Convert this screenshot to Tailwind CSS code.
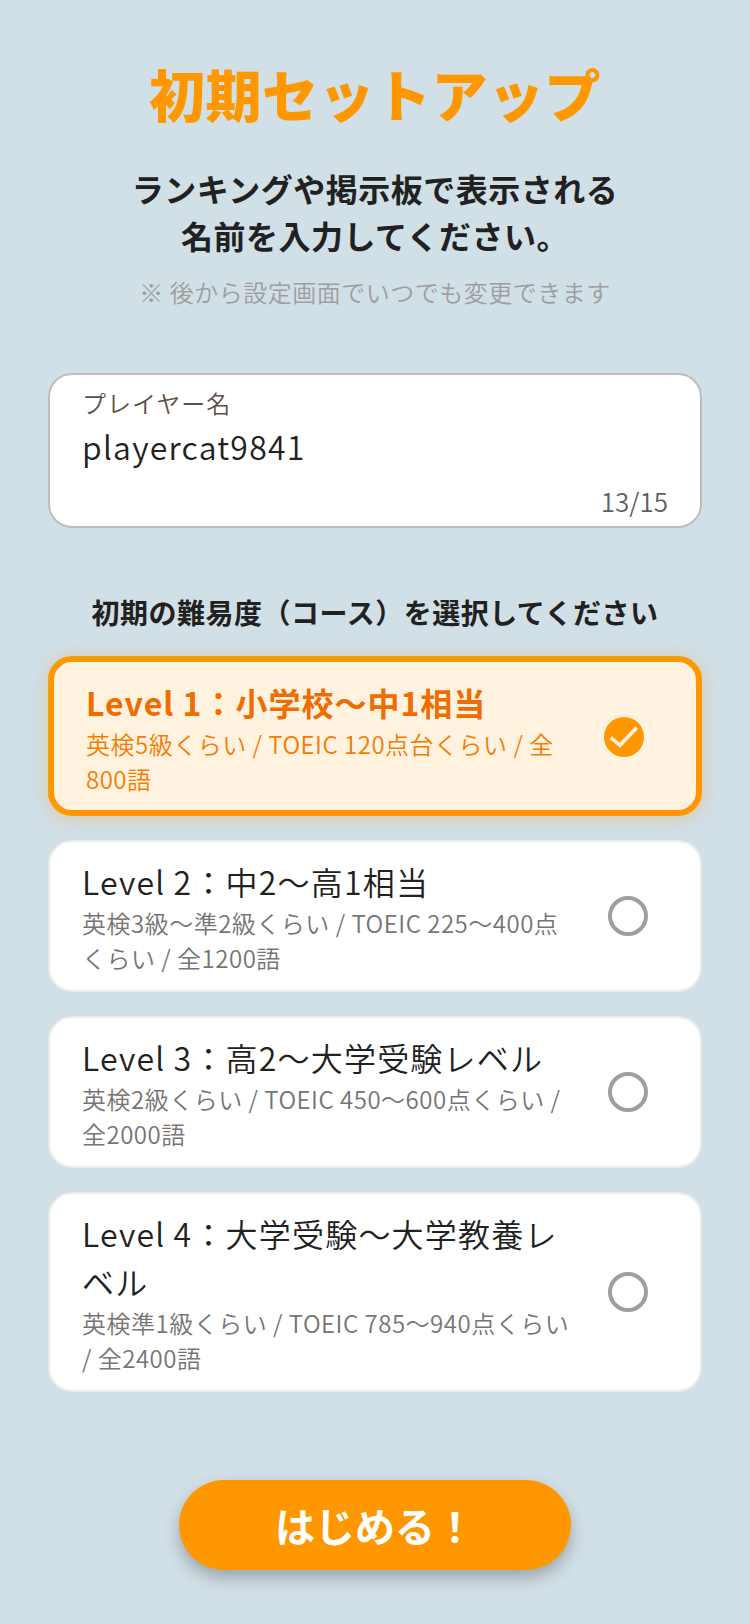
<!DOCTYPE html>
<html lang="ja">
<head>
    <meta charset="UTF-8">
    <meta name="viewport" content="width=device-width, initial-scale=1.0">
    <title>初期セットアップ</title>
    <script src="https://cdn.jsdelivr.net/npm/@tailwindcss/browser@4"></script>
</head>
<body class="bg-[#d1dfe6] font-['Noto_Sans_CJK_JP','Noto_Sans',sans-serif]">
    <div class="w-[750px] h-[1624px] overflow-hidden px-[48px] pt-[53px] flex flex-col">
        <!-- Header -->
        <h1 class="text-center text-[56px] leading-[80px] font-black tracking-[0.5px] text-[#ff9800]">初期セットアップ</h1>
        <p class="mt-[32px] text-center text-[32px] leading-[47px] font-bold tracking-[0.5px] text-[#212121]">ランキングや掲示板で表示される<br>名前を入力してください。</p>
        <p class="mt-[13px] text-center text-[24px] leading-[40px] text-[#9e9e9e] tracking-[0.5px] font-[350]">※ 後から設定画面でいつでも変更できます</p>

        <!-- Player name -->
        <div class="mt-[61px] h-[155px] bg-white border-2 border-[#bdbdbd] rounded-[24px] px-[32px] pt-[10px] flex flex-col">
            <span class="text-[24px] leading-[36px] tracking-[1px] text-[#5d4e46] font-[350]">プレイヤー名</span>
            <span class="mt-[1px] text-[32px] leading-[48px] text-[#212121] tracking-[1.25px] font-[350]">playercat9841</span>
            <span class="mt-[13px] self-end text-[26px] leading-[36px] text-[#616161] font-[350]">13/15</span>
        </div>

        <h2 class="mt-[64px] text-center text-[28px] leading-[40px] font-bold tracking-[0.5px] text-[#212121]">初期の難易度（コース）を選択してください</h2>

        <!-- Level list -->
        <div class="mt-[24px] flex flex-col gap-[24px]">
            <div class="flex items-center gap-[30px] bg-[#fff3e0] border-[6px] border-[#ff9800] rounded-[24px] pl-[32px] pr-[52px] pt-[16px] pb-[14px] shadow-[0_2px_16px_rgba(255,152,0,0.3)]">
                <div class="flex-1 min-w-0">
                    <p class="text-[32px] leading-[48px] font-bold tracking-[1px] text-[#ef6c00]">Level 1：小学校〜中1相当</p>
                    <p class="text-[24px] leading-[35px] tracking-[0.5px] text-[#f57c00] font-[350]">英検5級くらい / TOEIC 120点台くらい / 全800語</p>
                </div>
                <svg class="w-[40px] h-[40px] shrink-0" viewBox="0 0 40 40">
                    <circle cx="20" cy="20" r="20" fill="#ff9800"/>
                    <path d="M6.7 20.7 L16 28.3 L32.7 10.7" fill="none" stroke="#fff3e0" stroke-width="3.6"/>
                </svg>
            </div>
            <div class="flex items-center gap-[30px] bg-white border-2 border-[#ebebeb] rounded-[24px] pl-[32px] pr-[52px] py-[15px]">
                <div class="flex-1 min-w-0">
                    <p class="text-[32px] leading-[48px] tracking-[1.2px] text-[#212121] font-[350]">Level 2：中2〜高1相当</p>
                    <p class="text-[24px] leading-[35px] tracking-[0.5px] text-[#757575] font-[350]">英検3級〜準2級くらい / TOEIC 225〜400点くらい / 全1200語</p>
                </div>
                <div class="w-[40px] h-[40px] shrink-0 rounded-full border-4 border-[#9e9e9e]"></div>
            </div>
            <div class="flex items-center gap-[30px] bg-white border-2 border-[#ebebeb] rounded-[24px] pl-[32px] pr-[52px] py-[15px]">
                <div class="flex-1 min-w-0">
                    <p class="text-[32px] leading-[48px] tracking-[1.2px] text-[#212121] font-[350]">Level 3：高2〜大学受験レベル</p>
                    <p class="text-[24px] leading-[35px] tracking-[0.5px] text-[#757575] font-[350]">英検2級くらい / TOEIC 450〜600点くらい / 全2000語</p>
                </div>
                <div class="w-[40px] h-[40px] shrink-0 rounded-full border-4 border-[#9e9e9e]"></div>
            </div>
            <div class="flex items-center gap-[30px] bg-white border-2 border-[#ebebeb] rounded-[24px] pl-[32px] pr-[52px] py-[15px]">
                <div class="flex-1 min-w-0">
                    <p class="text-[32px] leading-[48px] tracking-[1.2px] text-[#212121] font-[350]">Level 4：大学受験〜大学教養レベル</p>
                    <p class="text-[24px] leading-[35px] tracking-[0.5px] text-[#757575] font-[350]">英検準1級くらい / TOEIC 785〜940点くらい / 全2400語</p>
                </div>
                <div class="w-[40px] h-[40px] shrink-0 rounded-full border-4 border-[#9e9e9e]"></div>
            </div>
        </div>

        <!-- Start -->
        <button class="mt-[88px] self-center w-[392px] h-[90px] rounded-full bg-[#ff9800] text-white text-[40px] font-bold shadow-[0_8px_16px_rgba(0,0,0,0.25)]">はじめる！</button>
    </div>
</body>
</html>
